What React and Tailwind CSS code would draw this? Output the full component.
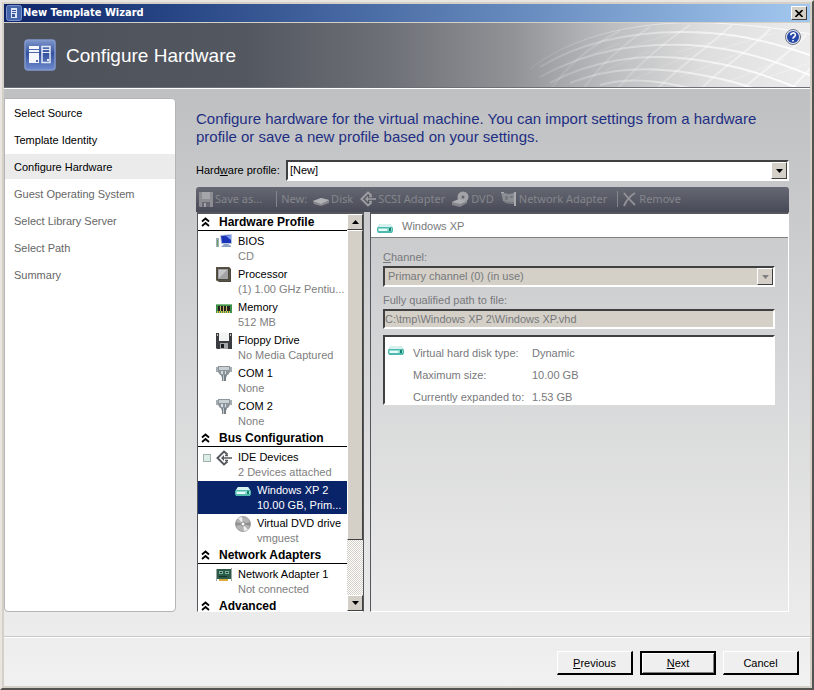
import React from 'react'

const steps = [
  { name: 'Select Source', done: true },
  { name: 'Template Identity', done: true },
  { name: 'Configure Hardware', done: true, active: true },
  { name: 'Guest Operating System' },
  { name: 'Select Library Server' },
  { name: 'Select Path' },
  { name: 'Summary' },
]

const groups = [
  {
    title: 'Hardware Profile',
    items: [
      { name: 'BIOS', detail: 'CD', icon: BiosIcon },
      { name: 'Processor', detail: '(1) 1.00 GHz Pentiu...', icon: CpuIcon },
      { name: 'Memory', detail: '512 MB', icon: MemoryIcon },
      { name: 'Floppy Drive', detail: 'No Media Captured', icon: FloppyIcon },
      { name: 'COM 1', detail: 'None', icon: PortIcon },
      { name: 'COM 2', detail: 'None', icon: PortIcon },
    ],
  },
  {
    title: 'Bus Configuration',
    items: [
      { name: 'IDE Devices', detail: '2 Devices attached', icon: BusIcon, parent: true },
      { name: 'Windows XP 2', detail: '10.00 GB, Prim...', icon: DiskIcon, child: true, selected: true },
      { name: 'Virtual DVD drive', detail: 'vmguest', icon: DiscIcon, child: true },
    ],
  },
  {
    title: 'Network Adapters',
    items: [{ name: 'Network Adapter 1', detail: 'Not connected', icon: NicIcon }],
  },
  { title: 'Advanced', items: [] },
]

function BiosIcon() {
  return (
    <svg width="16" height="16" viewBox="0 0 16 16">
      <path d="M0 4h3v9H0z" fill="#9aaeb4" />
      <path d="M1 6h1v6H1z" fill="#6fa06a" />
      <path d="M4 1l12-1v10L5 10z" fill="#b9c6e2" />
      <path d="M5 2l10-1v8L6 9z" fill="#1a33b8" />
      <path d="M10 2l5-1v5z" fill="#7f9ff2" />
      <path d="M8 10h4l3 2v1H5z" fill="#8fa2c4" />
    </svg>
  )
}

function CpuIcon() {
  return (
    <svg width="16" height="16" viewBox="0 0 16 16">
      <path d="M0 0h13l2 2v13H3l-3-2z" fill="#4a4640" />
      <path d="M0.500 0.500h13v13h-13z" fill="none" stroke="#6b5f45" strokeDasharray="1 1" />
      <path d="M2 2h10v10H2z" fill="#a3a3a6" />
      <path d="M3 3h8L3 11z" fill="#c6c6c9" />
    </svg>
  )
}

function MemoryIcon() {
  return (
    <svg width="16" height="16" viewBox="0 0 16 16">
      <path d="M0 4h16v9H0z" fill="#3f8f4d" />
      <path d="M0 4h16v1H0z" fill="#7dbb80" />
      <path d="M2 6h12v5H2z" fill="#24221c" />
      <path d="M4.500 6v5M7.500 6v5M10.500 6v5" stroke="#c9b56a" />
      <path d="M1 12h14" stroke="#e0bd45" strokeWidth="2" strokeDasharray="1 1" />
    </svg>
  )
}

function FloppyIcon() {
  return (
    <svg width="16" height="16" viewBox="0 0 16 16">
      <path d="M0 0h16v16H1l-1-1z" fill="#3a3c40" />
      <path d="M3 0h10v8H3z" fill="#f4f4f5" />
      <path d="M1 1h1v2H1zM14 1h1v2h-1z" fill="#c8c8c8" />
      <path d="M4 10h8v6H4z" fill="#a4a8ac" />
      <path d="M5 11h3v4H5z" fill="#1c1d20" />
    </svg>
  )
}

function PortIcon() {
  return (
    <svg width="16" height="16" viewBox="0 0 16 16">
      <path d="M0 1h2v5H0zM14 1h2v5h-2z" fill="#a5adb2" />
      <path d="M2 0h12v6l-2 3H4L2 6z" fill="#8c969c" />
      <path d="M3 1h10v3H3z" fill="#c9d1d5" />
      <path d="M5 5h2v3H5zM9 5h1v3H9z" fill="#d5dbde" />
      <path d="M5 9h6l-1 3v3H6v-3z" fill="#778087" />
      <path d="M7 9h1v6H7z" fill="#c2c9cd" />
    </svg>
  )
}

function BusIcon({ color = '#55585c' }) {
  return (
    <svg width="16" height="16" viewBox="0 0 16 16" fill="none" stroke={color} strokeWidth="2">
      <path d="M11.500 4.500L8 1.500 1.500 8 8 14.500l3.500-3" />
      <path d="M6 8h10M9 5.500h3M9 10.500h3" strokeWidth="1.500" />
      <path d="M5 8l3-3v6z" fill={color} stroke="none" />
    </svg>
  )
}

function DiskIcon() {
  return (
    <svg width="16" height="16" viewBox="0 0 16 16">
      <path d="M3 4h10l3 4v3l-1 2H1l-1-2V8z" fill="#4fb9ae" />
      <path d="M3 4h10l2 3H1z" fill="#d6f1ee" />
      <path d="M1 8h14v3H1z" fill="#8fdcd2" />
      <path d="M2 9h8v2H2z" fill="#e8fbf8" />
      <path d="M12 8h2v3h-2z" fill="#17806c" />
    </svg>
  )
}

function DiscIcon() {
  return (
    <svg width="16" height="16" viewBox="0 0 16 16">
      <circle cx="8" cy="8" r="7.500" fill="#b4b4b4" stroke="#a2a2a2" />
      <path d="M8 8L3 2l4-1zM8 8l5 6-4 1z" fill="#efefef" />
      <path d="M8 8l7-2v4zM8 8L1 6v4z" fill="#8f8f8f" />
      <circle cx="8" cy="8" r="2" fill="#fff" stroke="#8a8a8a" />
    </svg>
  )
}

function NicIcon() {
  return (
    <svg width="16" height="16" viewBox="0 0 16 16">
      <path d="M0 2h15v10H0z" fill="#2c5a4a" />
      <path d="M0 2h1v12H0zM15 1h1v13h-1z" fill="#9da8a4" />
      <path d="M3 4h4v3H3zM9 4h4v3H9z" fill="#7fb09a" />
      <path d="M4 5h2v1H4zM10 5h2v1h-2zM3 9h8v1H3z" fill="#16332a" />
      <path d="M3 12h9v2H3z" fill="#d9aa3c" />
    </svg>
  )
}

function SaveIcon() {
  return (
    <svg width="14" height="15" viewBox="0 0 14 15">
      <path d="M0 0h14v15H1l-1-1z" fill="#8b8d92" />
      <path d="M3 0h8v7H3z" fill="#a4a6aa" />
      <path d="M3 10h8v5H3z" fill="#676a72" />
      <path d="M5 11h2v4H5z" fill="#a0a2a7" />
    </svg>
  )
}

function NewDiskIcon() {
  return (
    <svg width="16" height="16" viewBox="0 0 16 16">
      <path d="M0 10l8-3 8 2v3l-8 3-7-2z" fill="#85888d" />
      <path d="M0 10l8-3 8 2-8 4z" fill="#b0b2b5" />
    </svg>
  )
}

function NewDvdIcon() {
  return (
    <svg width="17" height="16" viewBox="0 0 17 16">
      <circle cx="11" cy="6" r="5.500" fill="#a2a4a7" />
      <circle cx="11" cy="6" r="1.500" fill="#62656c" />
      <path d="M0 11l7-3 8 2v2l-7 4-8-2z" fill="#85878c" />
      <path d="M0 11l7-3 8 2-7 3z" fill="#acaeb1" />
    </svg>
  )
}

function NewNicIcon() {
  return (
    <svg width="16" height="16" viewBox="0 0 16 16">
      <path d="M0 1l3 1 5 1 5-1v9l-5 1-6-2-1-5z" fill="#8b8e93" />
      <path d="M4 5h3v4H4zM9 5h3v2H9z" fill="#777a81" />
      <path d="M0 1h3v1H0zM13 1h2v14h-2z" fill="#a7a9ad" />
      <path d="M3 10l5 1h5v2H9l-5-1z" fill="#777a81" />
    </svg>
  )
}

function ServerIcon() {
  return (
    <svg width="32" height="32" viewBox="0 0 32 32">
      <defs>
        <linearGradient id="tile" x1="0" y1="0" x2="0" y2="1">
          <stop offset="0" stopColor="#7f97cc" />
          <stop offset="0.45" stopColor="#34519e" />
          <stop offset="1" stopColor="#6f8bcd" />
        </linearGradient>
      </defs>
      <rect x="1" y="1" width="30" height="30" rx="3" fill="url(#tile)" stroke="#8299cd" strokeWidth="1.500" />
      <path d="M5 7h10v17H5z" fill="#f4f6fb" />
      <path d="M5 10.500h10M5 13.500h10" stroke="#4e67ad" />
      <path d="M12 21h2v2h-2z" fill="#4e67ad" />
      <path d="M18 7.500h8v16h-8z" fill="none" stroke="#e4e9f6" strokeWidth="1.500" />
      <path d="M18 10.500h8M18 13.500h8" stroke="#e4e9f6" />
      <path d="M23 20h2v2h-2z" fill="#e4e9f6" />
    </svg>
  )
}

function SmallServerIcon() {
  return (
    <svg width="16" height="16" viewBox="0 0 16 16">
      <rect x="0.500" y="0.500" width="15" height="15" rx="2" fill="#4765ab" stroke="#7a94cb" />
      <path d="M5 3h6v10H5z" fill="#dfe7f7" />
      <path d="M6 5.500h4M6 7.500h4" stroke="#3b559b" />
      <path d="M6 9h3v3H6z" fill="#3b559b" />
    </svg>
  )
}

function HeaderMesh() {
  return (
    <svg
      className="absolute inset-y-0 right-0"
      width="280"
      height="64"
      viewBox="0 0 280 64"
      fill="none"
      stroke="url(#mesh)"
    >
      <defs>
        <linearGradient id="mesh" gradientUnits="userSpaceOnUse" x1="0" y1="0" x2="280" y2="0">
          <stop offset="0" stopColor="#fff" stopOpacity="0.1" />
          <stop offset="0.4" stopColor="#fff" stopOpacity="0.35" />
          <stop offset="1" stopColor="#fff" stopOpacity="0.95" />
        </linearGradient>
      </defs>
      <path d="M0 46C40 14 110-6 200 1c40 3 60 6 80 10" />
      <g strokeWidth="2">
        <path d="M10 44C60 14 120 6 180 10c40 3 70 12 100 22" />
        <path d="M10 54C60 26 110 20 160 22c50 3 90 18 120 30" />
        <path d="M20 60C60 38 110 30 160 36c50 6 80 18 110 30" />
        <path d="M40 60C80 44 120 44 160 50c30 5 50 10 65 16" />
        <path d="M70 62C100 54 130 58 160 65" />
      </g>
      <g strokeWidth="2" opacity="0.6">
        <path d="M90 8C62 22 38 42 22 65M120 4C92 22 70 42 54 65M160 2C130 22 108 42 88 65" />
        <path d="M202 2C180 22 152 42 128 65M240 6C222 26 192 44 172 65M276 12C258 32 232 48 214 65M280 46L262 65" />
      </g>
      <g opacity="0.35">
        <path d="M30 44L90 20M50 58L120 28M95 60L160 32M100 24L150 8M145 30L205 12M150 54L210 30M195 60L255 36M190 26L245 10M235 55L280 40" />
      </g>
    </svg>
  )
}

function Chevrons() {
  return (
    <svg width="9" height="10" viewBox="0 0 9 10" fill="none" stroke="#000" strokeWidth="1.800">
      <path d="M1 4.500l3.500-3 3.500 3M1 9l3.500-3L8 9" />
    </svg>
  )
}

function Triangle({ up, muted }) {
  return (
    <svg width="7" height="4" viewBox="0 0 7 4" fill={muted ? '#808080' : '#000'}>
      <path d={up ? 'M0 4h7L3.500 0z' : 'M0 0h7L3.500 4z'} />
    </svg>
  )
}

const raised = 'border border-t-white border-l-white border-r-[#404040] border-b-[#404040] bg-[#d4d0c8]'
const sunken = 'border-2 border-t-[#404040] border-l-[#404040] border-r-white border-b-white'

function TitleBar() {
  return (
    <div className="flex h-[18px] items-center bg-gradient-to-r from-[#0d2469] to-[#a3c8ef] pr-[3px] pl-[2px]">
      <SmallServerIcon />
      <span className="ml-px flex-1 font-['DejaVu_Sans_Condensed','Noto_Sans',sans-serif] text-[11px] font-bold text-white">
        New Template Wizard
      </span>
      <button aria-label="Close" className={`flex h-[14px] w-4 items-center justify-center ${raised}`}>
        <svg width="8" height="7" viewBox="0 0 8 7" stroke="#000" strokeWidth="1.600">
          <path d="M0.500 0l7 7M7.500 0l-7 7" />
        </svg>
      </button>
    </div>
  )
}

function Header() {
  return (
    <header className="relative mt-px flex h-[65px] items-center border-b border-[#6d6f74] bg-[linear-gradient(90deg,#4d515a_0%,#53575f_30%,#6e7177_48%,#909296_63%,#bbbcbe_75%,#dedede_87%,#ececec_100%)] pl-5">
      <HeaderMesh />
      <ServerIcon />
      <h1 className="ml-[10px] pt-[2px] text-[19px] text-white">Configure Hardware</h1>
      <button aria-label="Help" className="absolute top-[6px] right-[9px]">
        <svg width="16" height="16" viewBox="0 0 16 16">
          <circle cx="8" cy="8" r="7.500" fill="#e3e6ee" stroke="#6e7588" />
          <circle cx="8" cy="8" r="6" fill="#2447a8" />
          <path d="M5.800 6.200c0-3 4.600-3 4.600-.2C10.400 7.800 8 7.700 8 9.700M8 11v1.600" fill="none" stroke="#fff" strokeWidth="1.600" />
        </svg>
      </button>
    </header>
  )
}

function Steps() {
  return (
    <nav className="flex w-[172px] shrink-0 flex-col gap-[2px] rounded-tr-[4px] rounded-b-[4px] border border-[#b4b5b7] bg-white pt-px">
      {steps.map((s) => (
        <button
          key={s.name}
          className={`h-[25px] pt-px pl-[9px] text-left ${s.active ? 'bg-[#ebebeb]' : ''} ${s.done ? 'text-black' : 'text-[#666]'}`}
        >
          {s.name}
        </button>
      ))}
    </nav>
  )
}

function ToolButton({ icon, children }) {
  return (
    <button className="flex items-center gap-[2px]" disabled>
      {icon}
      {children}
    </button>
  )
}

function Toolbar() {
  return (
    <div className="mt-[6px] flex h-[25px] items-center rounded-t-[3px] bg-gradient-to-b from-[#666973] to-[#484b57] pb-px pl-[3px] font-['Noto_Sans',sans-serif] whitespace-nowrap text-[#84868c]">
      <ToolButton icon={<SaveIcon />}>Save as...</ToolButton>
      <span className="ml-[14px] h-4 w-px bg-[#85878d]" />
      <span className="mr-[6px] ml-1">New:</span>
      <div className="flex gap-[7px]">
        <ToolButton icon={<NewDiskIcon />}>Disk</ToolButton>
        <ToolButton icon={<BusIcon color="#9c9ea2" />}>SCSI Adapter</ToolButton>
        <ToolButton icon={<NewDvdIcon />}>DVD</ToolButton>
        <ToolButton icon={<NewNicIcon />}>Network Adapter</ToolButton>
      </div>
      <span className="mr-1 ml-[10px] h-4 w-px bg-[#85878d]" />
      <ToolButton
        icon={
          <svg width="15" height="15" viewBox="0 0 15 15" fill="none" stroke="#8f9196" strokeWidth="2">
            <path d="M2 1c3 4 7 8 11 12M13 1C8 4 4 9 2 14" />
          </svg>
        }
      >
        Remove
      </ToolButton>
    </div>
  )
}

function DeviceRow({ item }) {
  const Icon = item.icon
  return (
    <li>
      <button
        className={`flex h-[33px] w-full items-start text-left ${item.selected ? 'bg-[#0a246a] text-white' : 'text-black'} ${item.child ? 'pl-[37px]' : 'pl-[18px]'}`}
      >
        {item.parent && (
          <span className="mt-[6px] mr-[5px] -ml-[13px] h-2 w-2 border border-[#9db5ac] bg-[#dcebe5]" />
        )}
        <span className="mt-[2px] mr-[6px] shrink-0">
          <Icon />
        </span>
        <span className="pt-[2px] leading-[15px] whitespace-nowrap">
          <span className="block">{item.name}</span>
          <span className={`block ${item.selected ? '' : 'text-[#808080]'}`}>{item.detail}</span>
        </span>
      </button>
    </li>
  )
}

function DeviceList() {
  return (
    <div className="flex w-[167px] shrink-0 overflow-hidden border border-t-2 border-[#55575c] border-b-white bg-white">
      <div className="min-w-0 flex-1 overflow-hidden">
        {groups.map((g) => (
          <section key={g.title}>
            <h2 className="mb-px flex h-[17px] items-center gap-[9px] border-b border-black pl-[3px] text-[12px] font-bold">
              <Chevrons />
              {g.title}
            </h2>
            <ul>
              {g.items.map((item) => (
                <DeviceRow key={item.name} item={item} />
              ))}
            </ul>
          </section>
        ))}
      </div>
      <div className="flex w-4 flex-col bg-[repeating-conic-gradient(#d4d0c8_0_25%,#fff_0_50%)] bg-[length:2px_2px]">
        <button aria-label="Scroll up" className={`flex h-4 items-center justify-center ${raised}`}>
          <Triangle up />
        </button>
        <div className={`flex-[310] ${raised}`} />
        <div className="flex-[55]" />
        <button aria-label="Scroll down" className={`flex h-4 items-center justify-center ${raised}`}>
          <Triangle />
        </button>
      </div>
    </div>
  )
}

function DiskDetails() {
  return (
    <section className="ml-[6px] flex min-w-0 flex-1 flex-col border border-t-2 border-[#55575c] border-r-white border-b-white text-[#77787b]">
      <h2 className="flex h-6 items-center gap-[9px] border-b border-[#808080] bg-white pt-px pl-[6px]">
        <span className="pt-1">
          <DiskIcon />
        </span>
        Windows XP
      </h2>
      <div className="flex flex-col pt-[11px] pr-[13px] pl-3">
        <label htmlFor="channel" className="mb-px leading-4">
          <u>C</u>hannel:
        </label>
        <div className="relative">
          <select
            id="channel"
            disabled
            className={`block h-[21px] w-full appearance-none bg-[#d4d0c8] pl-[3px] opacity-100 ${sunken}`}
          >
            <option>Primary channel (0) (in use)</option>
          </select>
          <span className={`pointer-events-none absolute top-[2px] right-[2px] flex h-[17px] w-4 items-center justify-center ${raised}`}>
            <Triangle muted />
          </span>
        </div>
        <label htmlFor="path" className="mt-[5px] mb-px leading-4">
          Fully qualified path to file:
        </label>
        <input
          id="path"
          disabled
          defaultValue="C:\tmp\Windows XP 2\Windows XP.vhd"
          className={`h-5 bg-[#d4d0c8] ${sunken}`}
        />
        <div className={`mt-[6px] flex h-[70px] overflow-hidden bg-white pt-[5px] pl-[3px] ${sunken}`}>
          <DiskIcon />
          <dl className="ml-[9px] grid auto-rows-[22px] grid-cols-[119px_auto] leading-[22px]">
            <dt>Virtual hard disk type:</dt>
            <dd>Dynamic</dd>
            <dt>Maximum size:</dt>
            <dd>10.00 GB</dd>
            <dt>Currently expanded to:</dt>
            <dd>1.53 GB</dd>
          </dl>
        </div>
      </div>
    </section>
  )
}

function Footer() {
  const button =
    'h-6 w-[76px] border border-r-2 border-b-2 border-t-white border-l-white border-r-black border-b-black bg-[#efefef] pt-px'
  return (
    <footer className="flex justify-end gap-[7px] border-t border-[#c6c7c9] pt-[14px] pr-[11px] pb-[11px] shadow-[inset_0_1px_#fff]">
      <button className={button}>
        <u>P</u>revious
      </button>
      <button className="h-6 w-[76px] border-2 border-black bg-[#efefef] shadow-[inset_1px_1px_#fff,inset_-1px_-1px_#808080]">
        <u>N</u>ext
      </button>
      <button className={button}>Cancel</button>
    </footer>
  )
}

export default function App() {
  return (
    <div className="flex h-screen flex-col overflow-hidden border-2 border-t-[#e9e6e1] border-r-[#55534f] border-b-[#55534f] border-l-[#e9e6e1] bg-[#d4d0c8] p-[2px] font-['Liberation_Sans',Arial,sans-serif] text-[11px]">
      <TitleBar />
      <Header />
      <div className="flex min-h-0 flex-1 flex-col border-t border-white bg-gradient-to-b from-[#bfc0c2] to-[#f1f1f1]">
        <div className="flex min-h-0 flex-1 pt-[9px] pb-6">
          <Steps />
          <main className="ml-5 flex min-w-0 flex-1 flex-col pt-3 pr-[21px]">
            <p className="text-[15px] leading-[18px] text-[#1e2f83]">
              Configure hardware for the virtual machine. You can import settings from a hardware profile or save a new
              profile based on your settings.
            </p>
            <div className="mt-[14px] flex items-center">
              <label htmlFor="profile" className="w-[90px]">
                Hard<u>w</u>are profile:
              </label>
              <div className="relative flex-1">
                <select id="profile" className={`block h-[21px] w-full appearance-none bg-white pl-[2px] ${sunken}`}>
                  <option>[New]</option>
                </select>
                <span className={`pointer-events-none absolute top-[2px] right-[2px] flex h-[17px] w-4 items-center justify-center ${raised}`}>
                  <Triangle />
                </span>
              </div>
            </div>
            <Toolbar />
            <div className="flex min-h-0 flex-1 pl-px">
              <DeviceList />
              <DiskDetails />
            </div>
          </main>
        </div>
        <Footer />
      </div>
    </div>
  )
}
